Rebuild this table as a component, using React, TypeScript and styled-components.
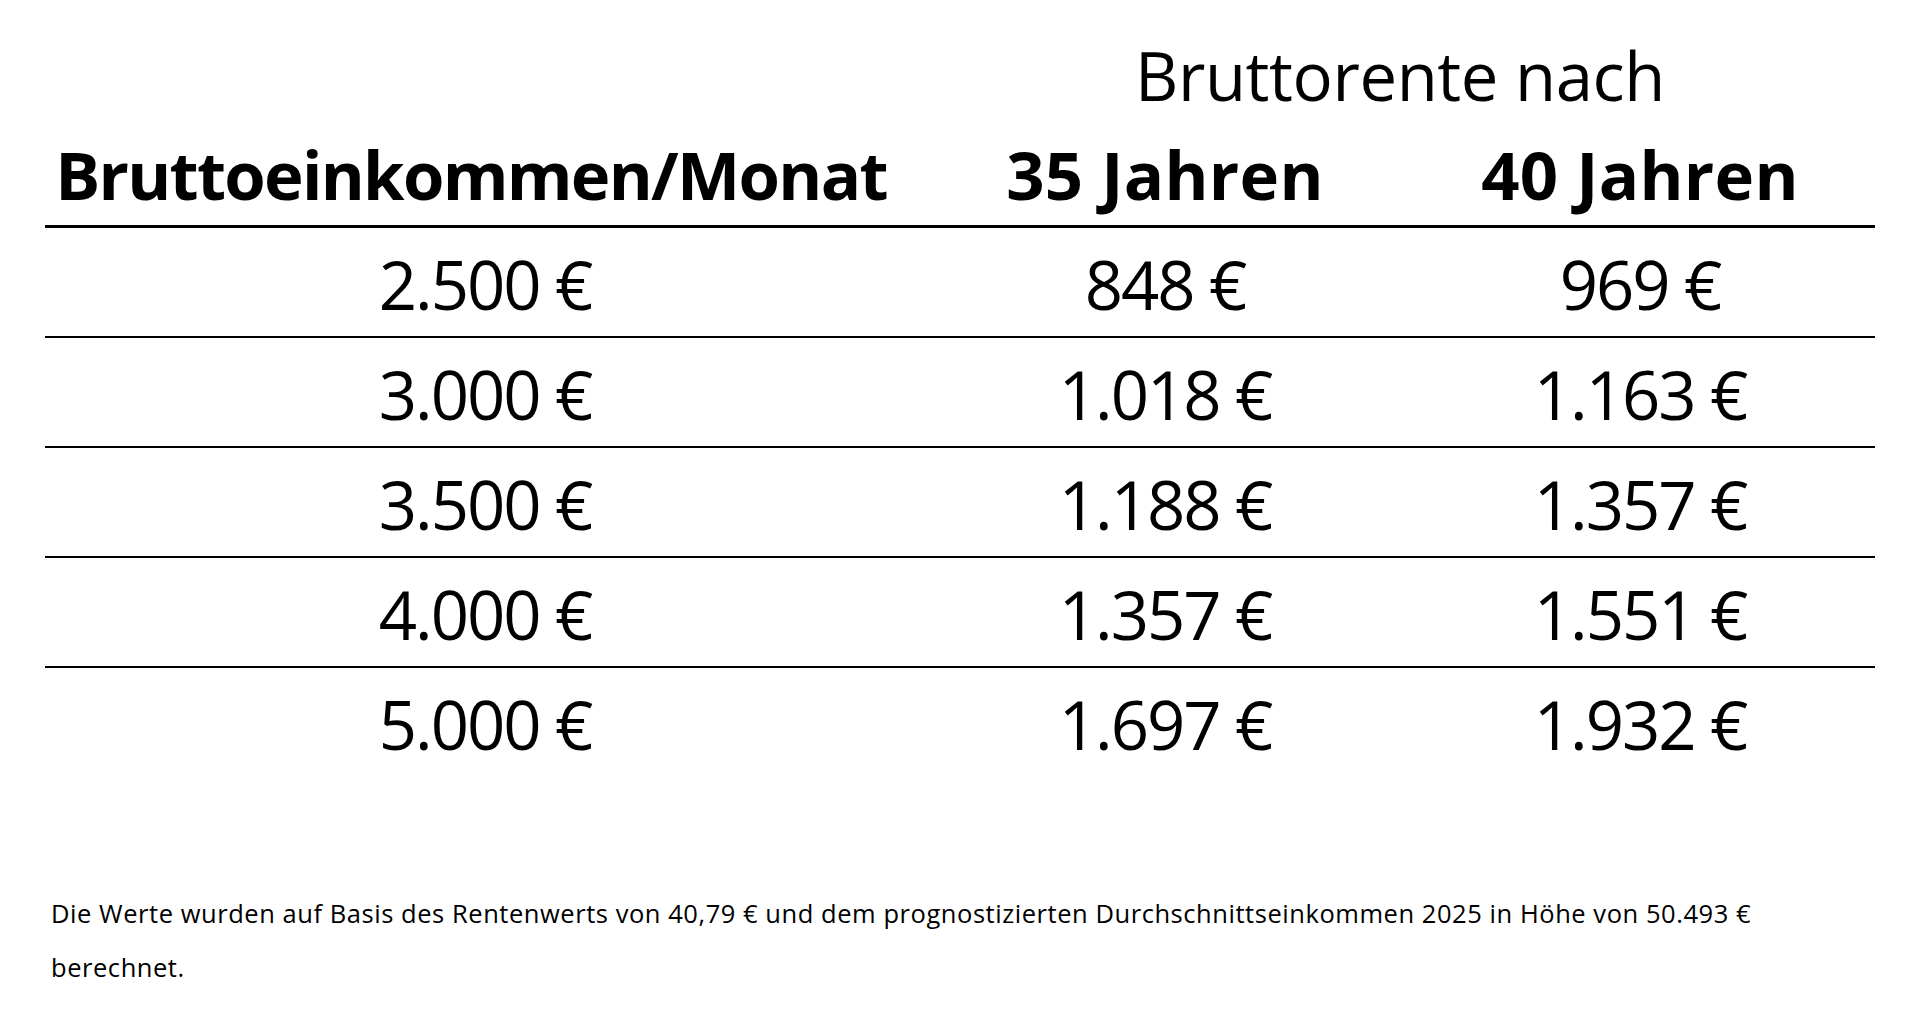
import React from "react";
import styled, { createGlobalStyle } from "styled-components";

const GlobalStyle = createGlobalStyle`
  html, body {
    margin: 0;
    padding: 0;
    background: #ffffff;
  }
  body {
    font-family: "Open Sans", "Noto Sans", "Liberation Sans", sans-serif;
    color: #000000;
  }
`;

const Page = styled.div`
  width: 1920px;
  padding-top: 35px;
  box-sizing: border-box;
`;

const Table = styled.div`
  width: 1830px;
  margin: 0 auto;
`;

const HeadGroup = styled.div`
  display: grid;
  grid-template-columns: 880px 480px 470px;
  row-gap: 19px;
  padding-bottom: 11px;
  border-bottom: 3px solid #000;
`;

const Cell = styled.div<{ $span?: number; $bold?: boolean; $spacing?: number; $padRight?: number }>`
  grid-column: span ${(p) => p.$span ?? 1};
  padding-right: ${(p) => p.$padRight ?? 0}px;
  text-align: center;
  font-size: 67px;
  line-height: 80px;
  font-weight: ${(p) => (p.$bold ? 700 : 400)};
  letter-spacing: ${(p) => p.$spacing ?? -2}px;
  white-space: nowrap;
`;

const Row = styled.div`
  display: grid;
  grid-template-columns: 880px 480px 470px;
  padding: 16px 0 12px;
  border-bottom: 2px solid #000;

  &:last-child {
    border-bottom: none;
  }
`;

const Footer = styled.p`
  margin: 110px 0 0;
  padding-left: 51px;
  font-size: 25.5px;
  line-height: 54px;
  letter-spacing: 0.55px;
`;

const rows: [string, string, string][] = [
  ["2.500 €", "848 €", "969 €"],
  ["3.000 €", "1.018 €", "1.163 €"],
  ["3.500 €", "1.188 €", "1.357 €"],
  ["4.000 €", "1.357 €", "1.551 €"],
  ["5.000 €", "1.697 €", "1.932 €"],
];

export default function App() {
  return (
    <Page>
      <GlobalStyle />
      <Table>
        <HeadGroup>
          <Cell />
          <Cell $span={2} $spacing={-0.4}>
            Bruttorente nach
          </Cell>
          <Cell $bold $spacing={-1.7} $padRight={28}>
            Bruttoeinkommen/Monat
          </Cell>
          <Cell $bold $spacing={0.3}>
            35 Jahren
          </Cell>
          <Cell $bold $spacing={0.3}>
            40 Jahren
          </Cell>
        </HeadGroup>
        {rows.map((r) => (
          <Row key={r[0]}>
            {r.map((v, i) => (
              <Cell key={i}>{v}</Cell>
            ))}
          </Row>
        ))}
      </Table>
      <Footer>
        Die Werte wurden auf Basis des Rentenwerts von 40,79 € und dem prognostizierten Durchschnittseinkommen 2025 in Höhe von 50.493 €
        <br />
        berechnet.
      </Footer>
    </Page>
  );
}
